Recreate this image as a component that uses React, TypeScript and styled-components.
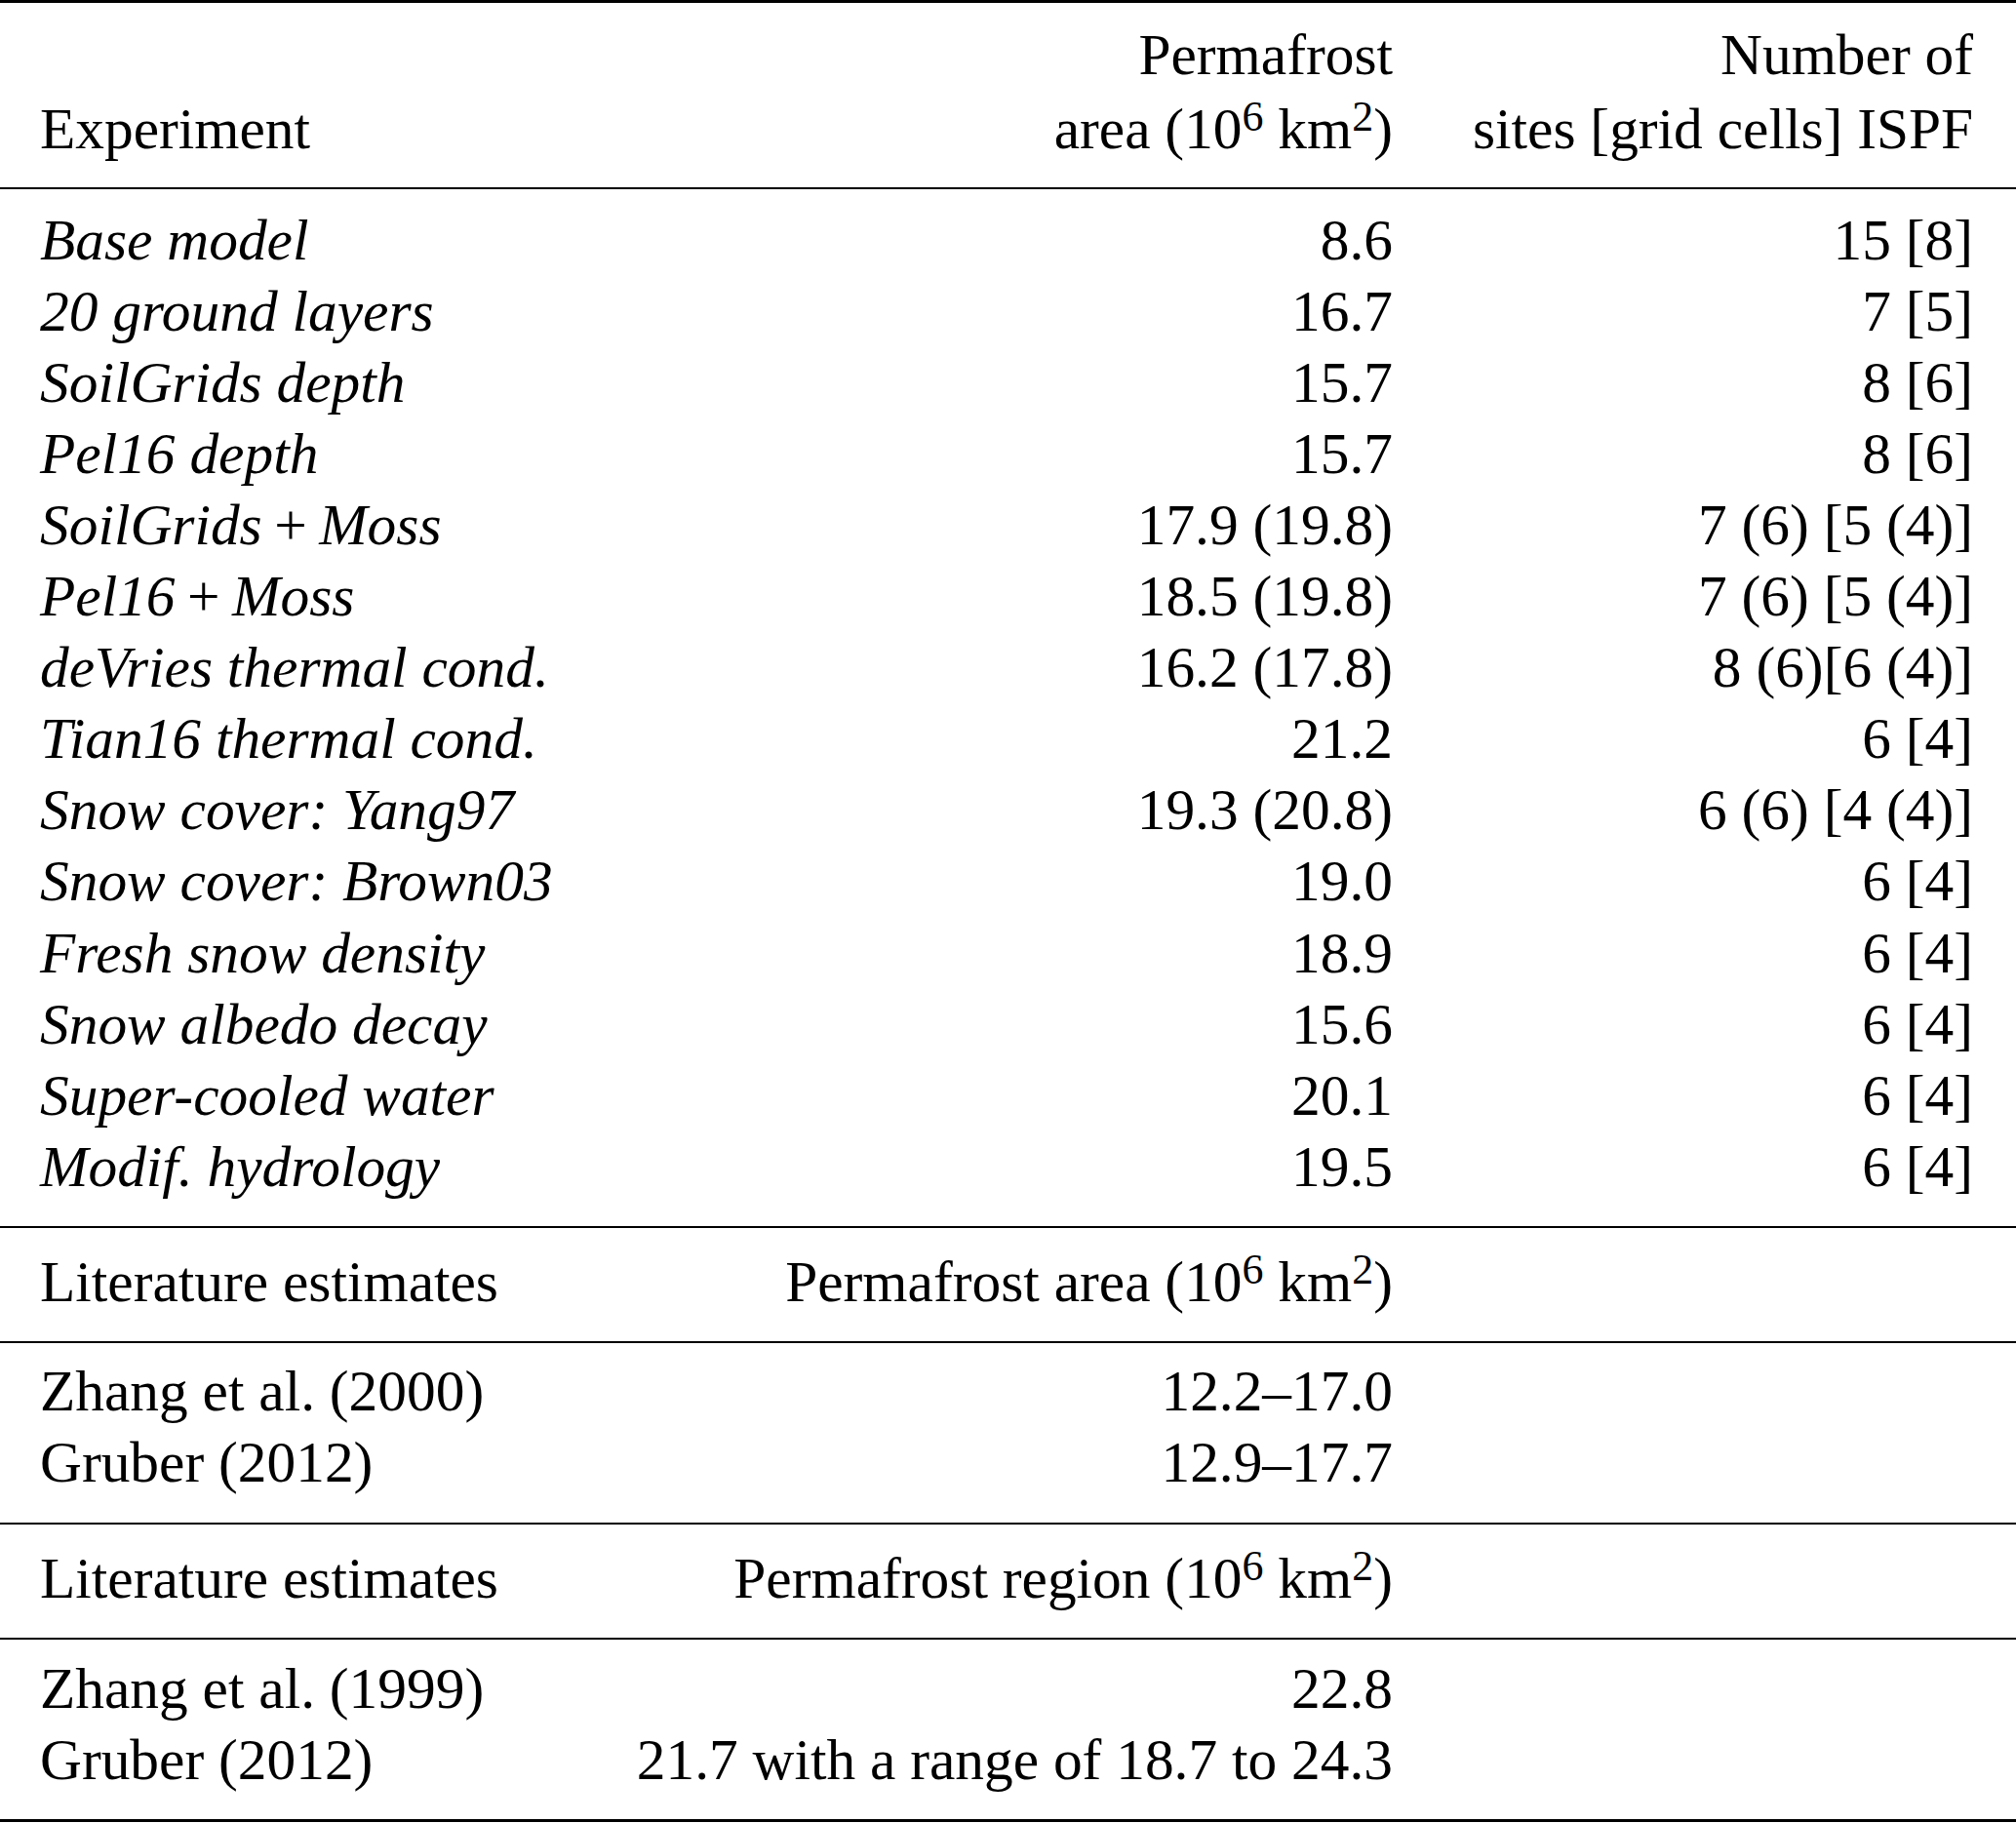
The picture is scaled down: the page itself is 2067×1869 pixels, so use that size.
import React from 'react';
import styled, { createGlobalStyle } from 'styled-components';

const GlobalStyle = createGlobalStyle`
  html, body {
    margin: 0;
    padding: 0;
    background: #ffffff;
  }
  body {
    font-family: "Liberation Serif", "Times New Roman", serif;
    color: #000000;
  }
`;

const Table = styled.div`
  width: 2067px;
  border-top: 3px solid #000;
  border-bottom: 3px solid #000;
  font-size: 59.4px;
`;

const Section = styled.div<{ $rule?: boolean; $pt: number; $pb: number }>`
  border-top: ${(p) => (p.$rule ? '2px solid #000' : 'none')};
  padding-top: ${(p) => p.$pt}px;
  padding-bottom: ${(p) => p.$pb}px;
`;

const Row = styled.div<{ $lh?: number }>`
  display: grid;
  grid-template-columns: 1fr auto 595px;
  padding: 0 44px 0 41px;
  line-height: ${(p) => p.$lh ?? 73.1}px;
  white-space: nowrap;
`;

const Cell = styled.div<{ $right?: boolean; $italic?: boolean }>`
  text-align: ${(p) => (p.$right ? 'right' : 'left')};
  font-style: ${(p) => (p.$italic ? 'italic' : 'normal')};
  align-self: end;
`;

const Sup = styled.sup`
  font-size: 0.74em;
  line-height: 0;
  vertical-align: 0.42em;
`;

// math-mode plus: upright, with slightly tighter spacing
const Plus = styled.span`
  font-style: normal;
  padding: 0 0.21em;
`;

const Unit = () => (
  <>
    (10<Sup>6</Sup> km<Sup>2</Sup>)
  </>
);

const Label = ({ text }: { text: string }) => {
  const parts = text.split(' + ');
  if (parts.length === 1) return <>{text}</>;
  return (
    <>
      {parts[0]}
      <Plus>+</Plus>
      {parts[1]}
    </>
  );
};

const experiments: [string, string, string][] = [
  ['Base model', '8.6', '15 [8]'],
  ['20 ground layers', '16.7', '7 [5]'],
  ['SoilGrids depth', '15.7', '8 [6]'],
  ['Pel16 depth', '15.7', '8 [6]'],
  ['SoilGrids + Moss', '17.9 (19.8)', '7 (6) [5 (4)]'],
  ['Pel16 + Moss', '18.5 (19.8)', '7 (6) [5 (4)]'],
  ['deVries thermal cond.', '16.2 (17.8)', '8 (6)[6 (4)]'],
  ['Tian16 thermal cond.', '21.2', '6 [4]'],
  ['Snow cover: Yang97', '19.3 (20.8)', '6 (6) [4 (4)]'],
  ['Snow cover: Brown03', '19.0', '6 [4]'],
  ['Fresh snow density', '18.9', '6 [4]'],
  ['Snow albedo decay', '15.6', '6 [4]'],
  ['Super-cooled water', '20.1', '6 [4]'],
  ['Modif. hydrology', '19.5', '6 [4]'],
];

const areaEstimates: [string, string][] = [
  ['Zhang et al. (2000)', '12.2–17.0'],
  ['Gruber (2012)', '12.9–17.7'],
];

const regionEstimates: [string, string][] = [
  ['Zhang et al. (1999)', '22.8'],
  ['Gruber (2012)', '21.7 with a range of 18.7 to 24.3'],
];

const App: React.FC = () => {
  return (
    <>
      <GlobalStyle />
      <Table>
        <Section $pt={15} $pb={22}>
          <Row $lh={76}>
            <Cell>Experiment</Cell>
            <Cell $right>
              Permafrost
              <br />
              area <Unit />
            </Cell>
            <Cell $right>
              Number of
              <br />
              sites [grid cells] ISPF
            </Cell>
          </Row>
        </Section>

        <Section $rule $pt={15.6} $pb={24}>
          {experiments.map(([name, area, sites]) => (
            <Row key={name}>
              <Cell $italic>
                <Label text={name} />
              </Cell>
              <Cell $right>{area}</Cell>
              <Cell $right>{sites}</Cell>
            </Row>
          ))}
        </Section>

        <Section $rule $pt={19} $pb={24}>
          <Row>
            <Cell>Literature estimates</Cell>
            <Cell $right>
              Permafrost area <Unit />
            </Cell>
            <Cell />
          </Row>
        </Section>

        <Section $rule $pt={13} $pb={25}>
          {areaEstimates.map(([ref, value]) => (
            <Row key={ref}>
              <Cell>{ref}</Cell>
              <Cell $right>{value}</Cell>
              <Cell />
            </Row>
          ))}
        </Section>

        <Section $rule $pt={19} $pb={24}>
          <Row>
            <Cell>Literature estimates</Cell>
            <Cell $right>
              Permafrost region <Unit />
            </Cell>
            <Cell />
          </Row>
        </Section>

        <Section $rule $pt={14} $pb={24}>
          {regionEstimates.map(([ref, value]) => (
            <Row key={ref + value}>
              <Cell>{ref}</Cell>
              <Cell $right>{value}</Cell>
              <Cell />
            </Row>
          ))}
        </Section>
      </Table>
    </>
  );
};

export default App;
